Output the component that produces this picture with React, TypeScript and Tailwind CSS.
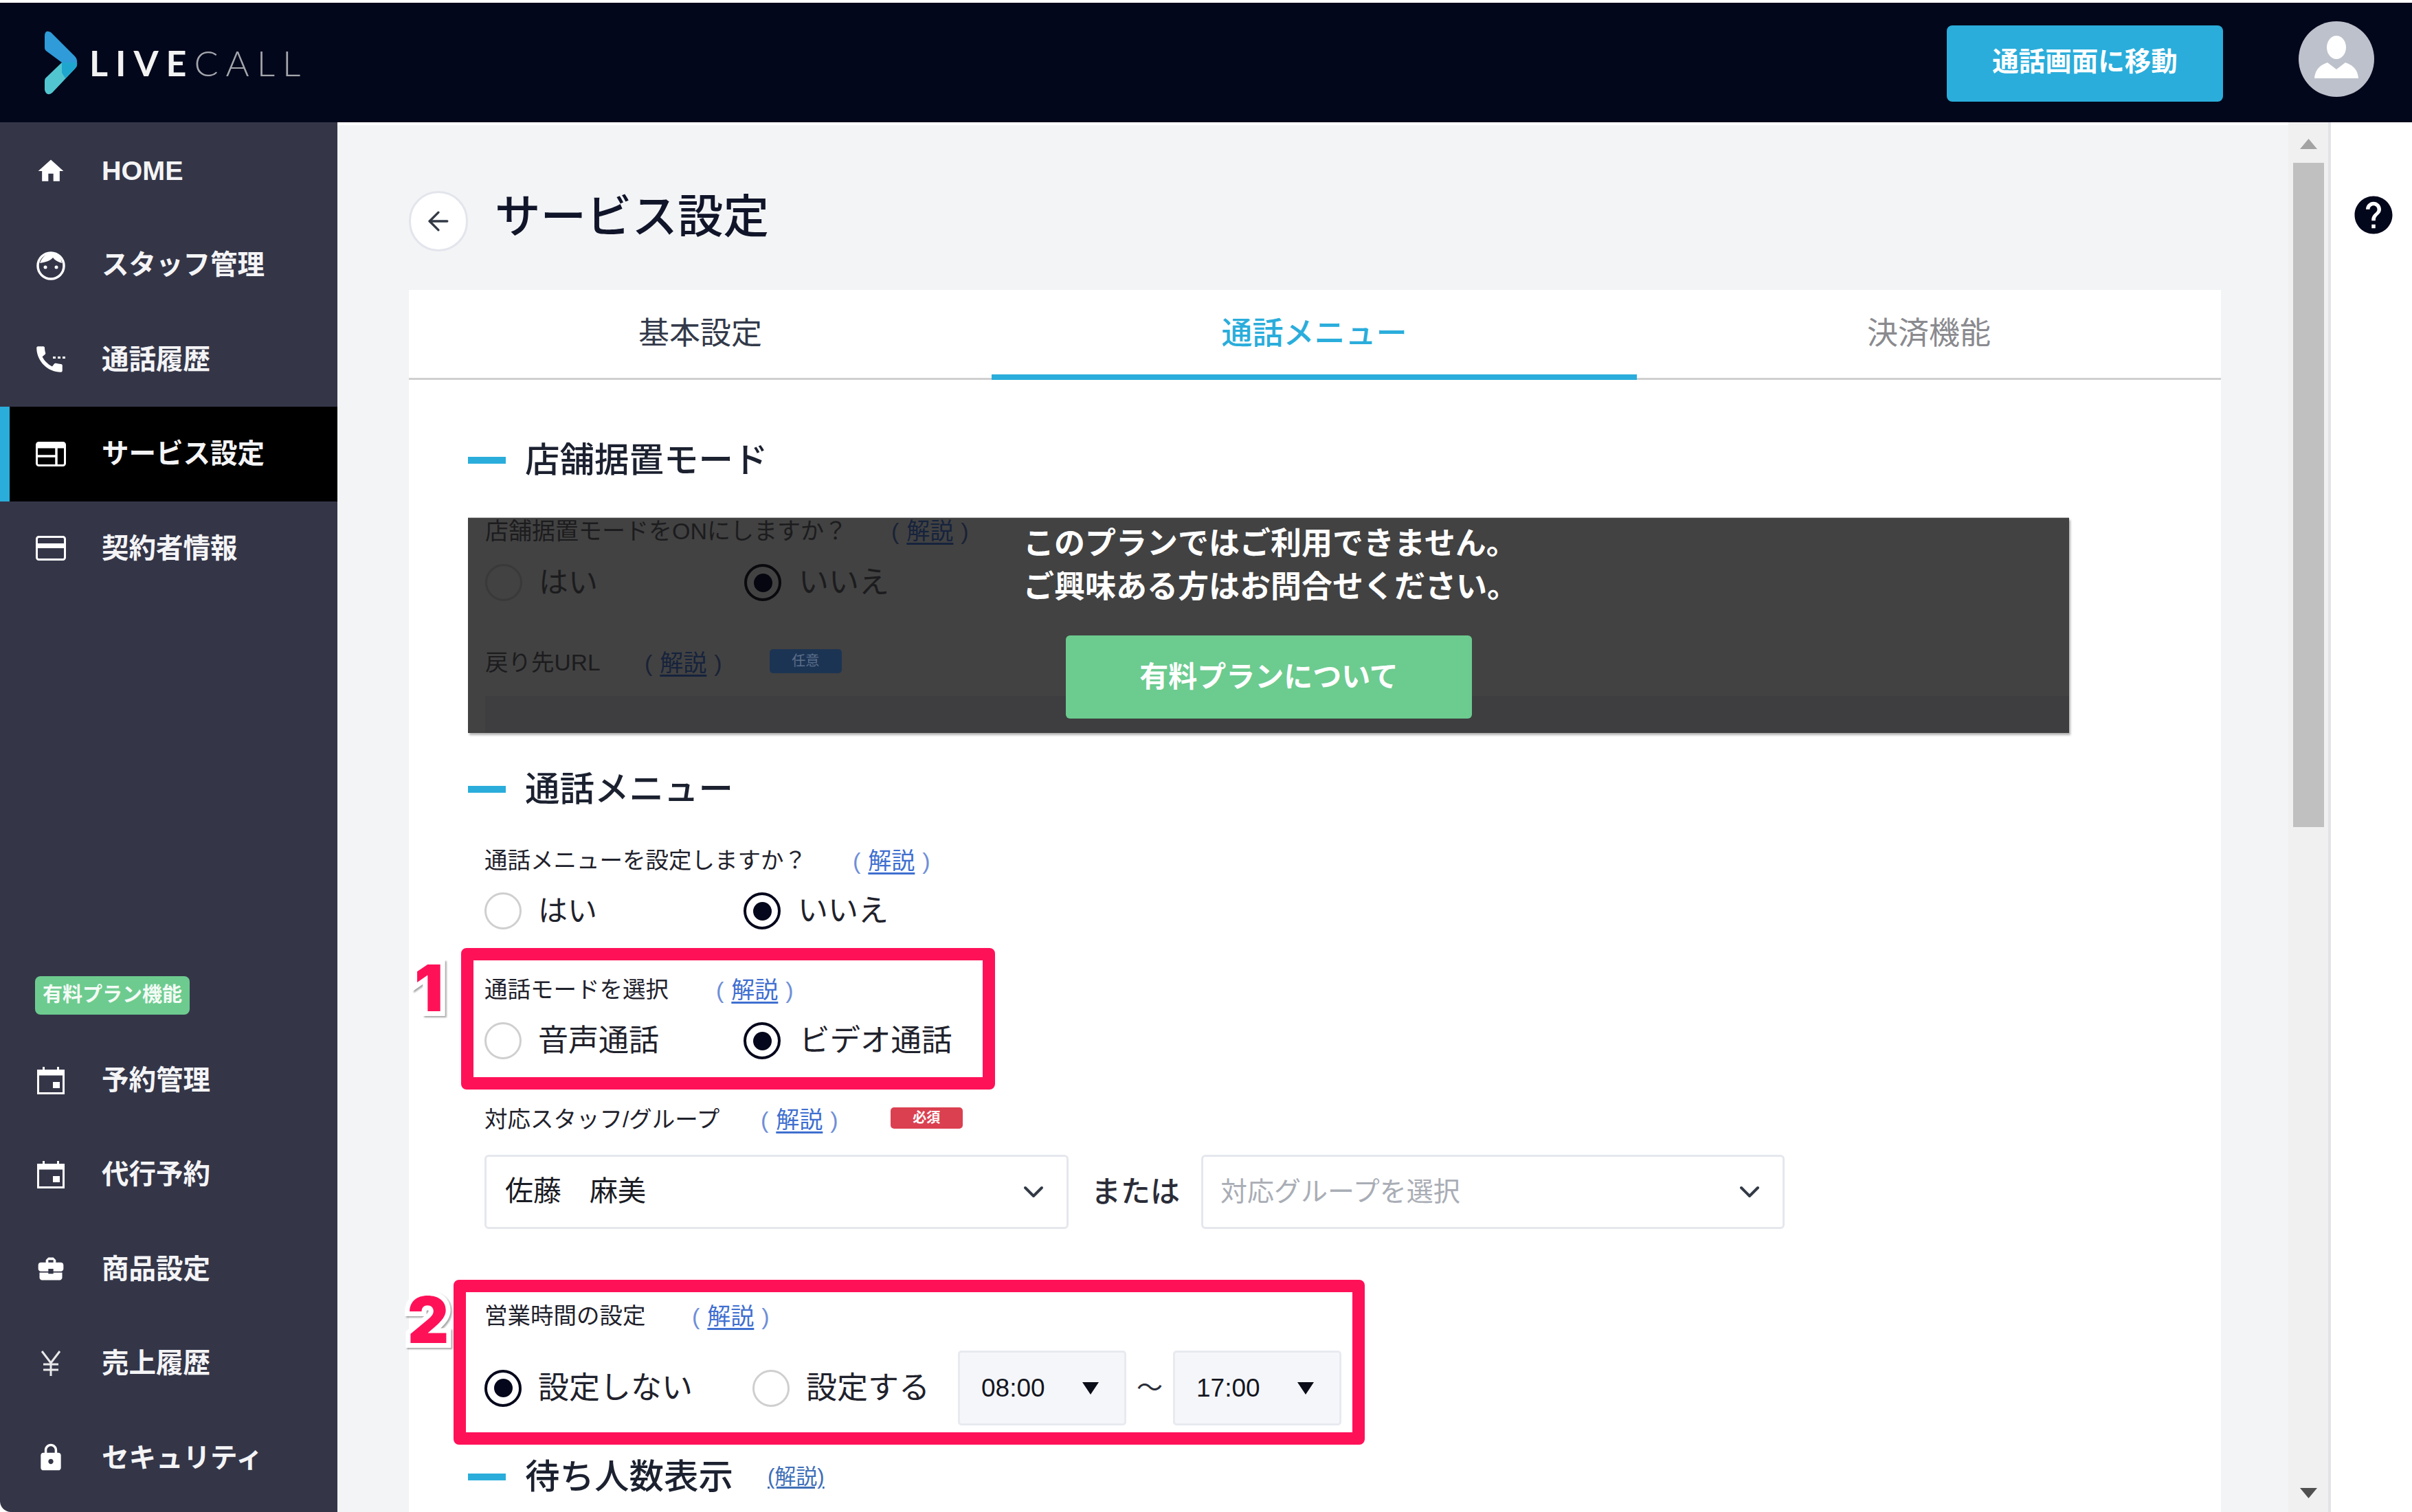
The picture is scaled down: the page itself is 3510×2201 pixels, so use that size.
import React from "react";
import { ArrowLeft, ChevronDown } from "lucide-react";
import { MdHome, MdBusinessCenter, MdLock, MdHelp, MdCall } from "react-icons/md";

const FaceIcon = () => (
  <svg viewBox="0 0 44 44" className="w-[44px] h-[44px]" fill="none">
    <circle cx="22" cy="23" r="19" stroke="white" strokeWidth="3.5" />
    <path d="M6 19 C10 8 18 3 24 4 C32 5 37 11 38 19 C32 17 28 15 25 11 C21 16 13 18 6 19Z" fill="white" />
    <circle cx="14" cy="25" r="2.5" fill="white" />
    <circle cx="30" cy="25" r="2.5" fill="white" />
  </svg>
);
const PhoneIcon = () => (
  <span className="relative block w-[42px] h-[40px]">
    <MdCall className="absolute left-[-6px] top-[-5px] w-[50px] h-[50px] text-white" />
    <span className="absolute left-[20px] top-[13px] w-[24px] h-[9px] bg-[#343648]" />
    <span className="absolute left-[24px] top-[16px] w-[4px] h-[3px] bg-white" />
    <span className="absolute left-[31px] top-[16px] w-[4px] h-[3px] bg-white" />
    <span className="absolute left-[38px] top-[16px] w-[4px] h-[3px] bg-white" />
  </span>
);
const ServiceIcon = () => (
  <svg viewBox="0 0 44 36" className="w-[44px] h-[36px]" fill="none">
    <rect x="1.5" y="1.5" width="41" height="33" rx="3" stroke="white" strokeWidth="3" />
    <rect x="1.5" y="1.5" width="41" height="8" fill="white" />
    <path d="M3 21 H29 M30 9 V33" stroke="white" strokeWidth="3.5" />
  </svg>
);
const CardIcon = () => (
  <svg viewBox="0 0 44 36" className="w-[44px] h-[36px]" fill="none">
    <rect x="1.5" y="1.5" width="41" height="33" rx="3" stroke="white" strokeWidth="3" />
    <rect x="1.5" y="11" width="41" height="7" fill="white" />
  </svg>
);
const CalendarIcon = () => (
  <svg viewBox="0 0 40 40" className="w-[40px] h-[40px]" fill="none">
    <rect x="1.5" y="5.5" width="37" height="33" stroke="white" strokeWidth="3" />
    <rect x="1.5" y="5.5" width="37" height="7" fill="white" />
    <rect x="8" y="0" width="3" height="6" fill="white" />
    <rect x="29" y="0" width="3" height="6" fill="white" />
    <rect x="23" y="22" width="10" height="9" fill="white" />
  </svg>
);
const YenIcon = () => (
  <svg viewBox="0 0 30 38" className="w-[30px] h-[38px]" fill="none" stroke="#e8e8ea" strokeWidth="3">
    <path d="M2 1 L15 18 L28 1 M15 18 V37 M4 20 H26 M4 28 H26" />
  </svg>
);

const Logo = () => (
  <div className="flex items-center ml-[65px]">
    <svg viewBox="0 0 48 94" className="w-[48px] h-[94px]">
      <path d="M0 9 Q0 -2 9 3 L44 38 Q48 42 47 47 L25 47 L2 30 Q0 28 0 26Z" fill="#2f9bd8" />
      <path d="M47 47 Q48 52 44 56 L11 91 Q3 97 0 87 L0 74 Q0 70 3 68 L25 47Z" fill="#52c6d0" />
      <path d="M25 47 L47 47 Q48 52 44 56 L30 70 L25 62Z" fill="#1fa6cf" />
    </svg>
    <span className="ml-[17px] text-[52px] leading-none font-['Lato',sans-serif] tracking-[11px] flex">
      <span className="font-bold text-[#f2f2f2]">LIVE</span>
      <span className="font-light text-[#a3a7ad]">CALL</span>
    </span>
  </div>
);

const NavItem = ({ icon, label, active }: { icon: React.ReactNode; label: string; active?: boolean }) => (
  <div className={active ? "h-[137.4px] flex items-center bg-black border-l-[14px] border-[#2aaddb] pl-[38px]" : "h-[137.4px] flex items-center pl-[52px]"}>
    <span className="w-[44px] flex items-center justify-center shrink-0">{icon}</span>
    <span className="ml-[52px] text-[39.5px] font-bold text-[#f4f4f6]">{label}</span>
  </div>
);

const Radio = ({ on, dim }: { on?: boolean; dim?: boolean }) => {
  if (dim) {
    return on ? (
      <span className="w-[54px] h-[54px] rounded-full border-[4px] border-[#0a0a0e] flex items-center justify-center shrink-0">
        <span className="w-[27px] h-[27px] rounded-full bg-[#05060f]" />
      </span>
    ) : (
      <span className="w-[54px] h-[54px] rounded-full border-[3px] border-[#393939] shrink-0" />
    );
  }
  return on ? (
    <span className="w-[54px] h-[54px] rounded-full border-[4px] border-[#05081c] bg-white flex items-center justify-center shrink-0">
      <span className="w-[27px] h-[27px] rounded-full bg-[#05081c]" />
    </span>
  ) : (
    <span className="w-[54px] h-[54px] rounded-full border-[3px] border-[#cfcfcf] bg-white shrink-0" />
  );
};

const Help = ({ dim }: { dim?: boolean }) => (
  <span className={dim ? "text-[34px] text-[#1a2236] flex items-center" : "text-[34px] text-[#6f8fd8] flex items-center"}>
    <span>(</span>
    <span className={dim ? "mx-[11px] underline underline-offset-[5px] text-[#16233d]" : "mx-[11px] underline underline-offset-[5px] text-[#3f6fd0]"}>解説</span>
    <span>)</span>
  </span>
);

const SectionTitle = ({ label, children }: { label: string; children?: React.ReactNode }) => (
  <div className="h-[70px] flex items-center">
    <span className="w-[55px] h-[10px] bg-[#2aaddb] shrink-0" />
    <span className="ml-[28px] text-[50.5px] font-medium text-[#1c2130]">{label}</span>
    {children}
  </div>
);

const RedBox = ({ className }: { className: string }) => (
  <div className={"absolute border-[18px] border-[#ff1158] rounded-[8px] " + className} />
);

const Tri = () => (
  <svg viewBox="0 0 24 18" className="w-[24px] h-[18px] shrink-0">
    <path d="M0 0 H24 L12 18Z" fill="#0b0d18" />
  </svg>
);

const TimeBox = ({ value }: { value: string }) => (
  <div className="w-[245px] h-[109px] bg-[#f5f6fa] border-[3px] border-[#e8eaf0] rounded-[5px] flex items-center pl-[31px] pr-[37px] shrink-0">
    <span className="text-[37px] text-[#14161f]">{value}</span>
    <span className="ml-auto">
      <Tri />
    </span>
  </div>
);

export default function App() {
  return (
    <div className="relative w-[3510px] h-[2201px] overflow-hidden bg-white pt-[4px] flex flex-col font-['Liberation_Sans','Noto_Sans_CJK_JP',sans-serif]">
      <header className="h-[174px] shrink-0 bg-[#03071b] flex items-center">
        <Logo />
        <button className="ml-auto w-[402px] h-[111px] mt-[3px] pb-[6px] rounded-[8px] bg-[#2aaddb] text-[38.5px] font-bold text-white">
          通話画面に移動
        </button>
        <div className="ml-[110px] mr-[55px] w-[110px] h-[110px] -mt-[10px] rounded-full bg-[#bdc1cb] overflow-hidden flex items-center justify-center">
          <svg viewBox="0 0 110 110" className="w-[110px] h-[110px]">
            <ellipse cx="55" cy="38" rx="14" ry="17" fill="white" />
            <path d="M23 83 Q24 66 42 60 L55 70 L68 60 Q86 66 87 83Z" fill="white" />
          </svg>
        </div>
      </header>

      <div className="flex flex-1 min-h-0">
        <aside className="w-[491px] shrink-0 bg-[#343648] rounded-bl-[16px] flex flex-col pt-[2px]">
          <NavItem icon={<MdHome className="w-[46px] h-[46px] text-white" />} label="HOME" />
          <NavItem icon={<FaceIcon />} label="スタッフ管理" />
          <NavItem icon={<PhoneIcon />} label="通話履歴" />
          <NavItem icon={<ServiceIcon />} label="サービス設定" active />
          <NavItem icon={<CardIcon />} label="契約者情報" />
          <div className="mt-[554px] ml-[51px] w-[225px] h-[56px] rounded-[8px] bg-[#6dcb8f] flex items-center justify-center text-[29px] font-bold text-[#f4fbf6]">
            有料プラン機能
          </div>
          <div className="mt-[27px]">
            <NavItem icon={<CalendarIcon />} label="予約管理" />
            <NavItem icon={<CalendarIcon />} label="代行予約" />
            <NavItem icon={<MdBusinessCenter className="w-[50px] h-[50px] text-white" />} label="商品設定" />
            <NavItem icon={<YenIcon />} label="売上履歴" />
            <NavItem icon={<MdLock className="w-[50px] h-[50px] text-white" />} label="セキュリティ" />
          </div>
        </aside>

        <main className="flex-1 min-w-0 bg-[#f3f4f6] border-t-[4px] border-white pl-[104px] pr-[98px] flex flex-col">
          <div className="mt-[96px] h-[88px] flex items-center shrink-0">
            <span className="w-[86px] h-[88px] rounded-full bg-white border-[3px] border-[#e3e5ec] flex items-center justify-center shrink-0">
              <ArrowLeft className="w-[44px] h-[44px] text-[#333a46]" strokeWidth={1.8} />
            </span>
            <h1 className="ml-[39px] -mt-[10px] text-[66.5px] font-medium text-[#11152a]">サービス設定</h1>
          </div>

          <section className="mt-[56px] flex-1 min-h-0 bg-white flex flex-col overflow-hidden">
            <div className="h-[131px] shrink-0 border-b-[3px] border-[#cfcfcf] flex">
              <div className="w-[848px] flex items-center justify-center text-[45px] text-[#333a4a]">基本設定</div>
              <div className="w-[939px] h-[131px] border-b-[8px] border-[#2aaddb] pt-[5px] flex items-center justify-center text-[45px] font-medium text-[#2aaddb]">通話メニュー</div>
              <div className="w-[850px] flex items-center justify-center text-[45px] text-[#8a8a8f]">決済機能</div>
            </div>

            <div className="pl-[86px] flex flex-col">
              <div className="mt-[82px]">
                <SectionTitle label="店舗据置モード" />
              </div>

              <div className="relative mt-[49px] w-[2330px] h-[313px] bg-[#424242] overflow-hidden shadow-[0_-1px_0_#bbb,2px_3px_3px_rgba(0,0,0,0.3)]">
                <div className="pl-[25px] flex flex-col text-[#1c1c1e]">
                  <div className="h-[38px] flex items-center">
                    <span className="w-[591px] text-[34px]">店舗据置モードをONにしますか？</span>
                    <Help dim />
                  </div>
                  <div className="mt-[29px] h-[54px] flex items-center">
                    <div className="w-[377px] flex items-center">
                      <Radio dim />
                      <span className="ml-[24px] text-[43px]">はい</span>
                    </div>
                    <div className="flex items-center">
                      <Radio dim on />
                      <span className="ml-[25px] text-[44px]">いいえ</span>
                    </div>
                  </div>
                  <div className="mt-[70px] h-[40px] flex items-center">
                    <span className="w-[232px] text-[33.5px]">戻り先URL</span>
                    <Help dim />
                    <span className="ml-[69px] -mt-[6px] w-[105px] h-[35px] rounded-[5px] bg-[#1c3454] flex items-center justify-center text-[20px] text-[#5c6f8a]">任意</span>
                  </div>
                  <div className="mt-[28px] h-[53px] bg-[#3e3e40]" />
                </div>
                <div className="absolute left-[808px] top-[6px] text-[45px] leading-[63px] font-bold text-white">
                  <p>このプランではご利用できません。</p>
                  <p>ご興味ある方はお問合せください。</p>
                </div>
                <button className="absolute left-[870px] top-[171px] w-[591px] h-[121px] rounded-[6px] bg-[#6ccb8f] text-[42px] font-bold text-white">
                  有料プランについて
                </button>
              </div>

              <div className="mt-[47px]">
                <SectionTitle label="通話メニュー" />
              </div>

              <div className="pl-[24px] flex flex-col text-[#1f222c]">
                <div className="mt-[49px] h-[40px] flex items-center">
                  <span className="w-[536px] text-[33.5px]">通話メニューを設定しますか？</span>
                  <Help />
                </div>
                <div className="mt-[26px] h-[54px] flex items-center">
                  <div className="w-[377px] flex items-center">
                    <Radio />
                    <span className="ml-[24px] text-[43px]">はい</span>
                  </div>
                  <div className="flex items-center">
                    <Radio on />
                    <span className="ml-[25px] text-[44px]">いいえ</span>
                  </div>
                </div>

                <div className="mt-[68px] h-[40px] flex items-center">
                  <span className="w-[337px] text-[33.5px]">通話モードを選択</span>
                  <Help />
                </div>
                <div className="mt-[27px] h-[54px] flex items-center">
                  <div className="w-[377px] flex items-center">
                    <Radio />
                    <span className="ml-[24px] text-[44px]">音声通話</span>
                  </div>
                  <div className="flex items-center">
                    <Radio on />
                    <span className="ml-[27px] text-[44.5px]">ビデオ通話</span>
                  </div>
                </div>

                <div className="mt-[68px] h-[40px] flex items-center">
                  <span className="w-[402px] text-[33.5px]">対応スタッフ/グループ</span>
                  <Help />
                  <span className="ml-[76px] -mt-[6px] w-[105px] h-[31px] rounded-[5px] bg-[#db4050] flex items-center justify-center text-[20px] font-bold text-white">必須</span>
                </div>
                <div className="mt-[31px] h-[108px] flex items-center">
                  <div className="w-[850px] h-[108px] bg-white border-[3px] border-[#e5e7ed] rounded-[6px] flex items-center pl-[27px] pr-[24px] shrink-0">
                    <span className="text-[41px] text-[#1a1c24]">佐藤　麻美</span>
                    <ChevronDown className="ml-auto w-[48px] h-[48px] text-[#333a46]" strokeWidth={2} />
                  </div>
                  <span className="ml-[33px] w-[130px] text-[43px] font-medium text-[#2a2d38] shrink-0">または</span>
                  <div className="w-[849px] h-[108px] ml-[30px] bg-white border-[3px] border-[#e5e7ed] rounded-[6px] flex items-center pl-[25px] pr-[24px] shrink-0">
                    <span className="text-[39px] text-[#a9adb5]">対応グループを選択</span>
                    <ChevronDown className="ml-auto w-[48px] h-[48px] text-[#333a46]" strokeWidth={2} />
                  </div>
                </div>

                <div className="mt-[107px] h-[40px] flex items-center">
                  <span className="w-[302px] text-[33.5px]">営業時間の設定</span>
                  <Help />
                </div>
                <div className="mt-[30px] h-[109px] flex items-center">
                  <div className="w-[390px] flex items-center shrink-0">
                    <Radio on />
                    <span className="ml-[24px] text-[45px]">設定しない</span>
                  </div>
                  <div className="w-[299px] flex items-center shrink-0">
                    <Radio />
                    <span className="ml-[24px] text-[45px]">設定する</span>
                  </div>
                  <TimeBox value="08:00" />
                  <span className="w-[68px] text-center text-[38px] text-[#2a2d38] shrink-0">～</span>
                  <TimeBox value="17:00" />
                </div>
              </div>

              <div className="mt-[40px]">
                <SectionTitle label="待ち人数表示">
                  <span className="ml-[50px] text-[31px] text-[#3f6fb8] underline underline-offset-[4px]">(解説)</span>
                </SectionTitle>
              </div>
            </div>
          </section>
        </main>

        <div className="w-[62px] shrink-0 bg-[#f0f0f1] border-r-[4px] border-[#e2e3e8] flex flex-col items-center">
          <svg viewBox="0 0 25 15" className="w-[25px] h-[15px] mt-[24px] shrink-0">
            <path d="M12.5 0 L25 15 H0Z" fill="#a3a3a3" />
          </svg>
          <div className="mt-[20px] w-[45px] h-[967px] bg-[#c0c0c0] shrink-0" />
          <svg viewBox="0 0 25 15" className="w-[25px] h-[15px] mt-auto mb-[20px] shrink-0">
            <path d="M0 0 H25 L12.5 15Z" fill="#505050" />
          </svg>
        </div>

        <div className="w-[118px] shrink-0 bg-white flex justify-center pt-[102px]">
          <MdHelp className="w-[66px] h-[66px] text-[#03071b] ml-[6px]" />
        </div>
      </div>

      <RedBox className="left-[671px] top-[1380px] w-[777px] h-[206px]" />
      <RedBox className="left-[660px] top-[1863px] w-[1326px] h-[240px]" />
      <span className="absolute left-[603px] top-[1392px] text-[93px] leading-none font-black font-['Inter',sans-serif] text-[#ff1158] [-webkit-text-stroke:14px_white] [paint-order:stroke_fill] drop-shadow-[2px_2px_1px_rgba(0,0,0,0.35)]">1</span>
      <span className="absolute left-[593px] top-[1875px] text-[93px] leading-none font-black font-['Inter',sans-serif] text-[#ff1158] [-webkit-text-stroke:14px_white] [paint-order:stroke_fill] drop-shadow-[2px_2px_1px_rgba(0,0,0,0.35)]">2</span>
    </div>
  );
}
